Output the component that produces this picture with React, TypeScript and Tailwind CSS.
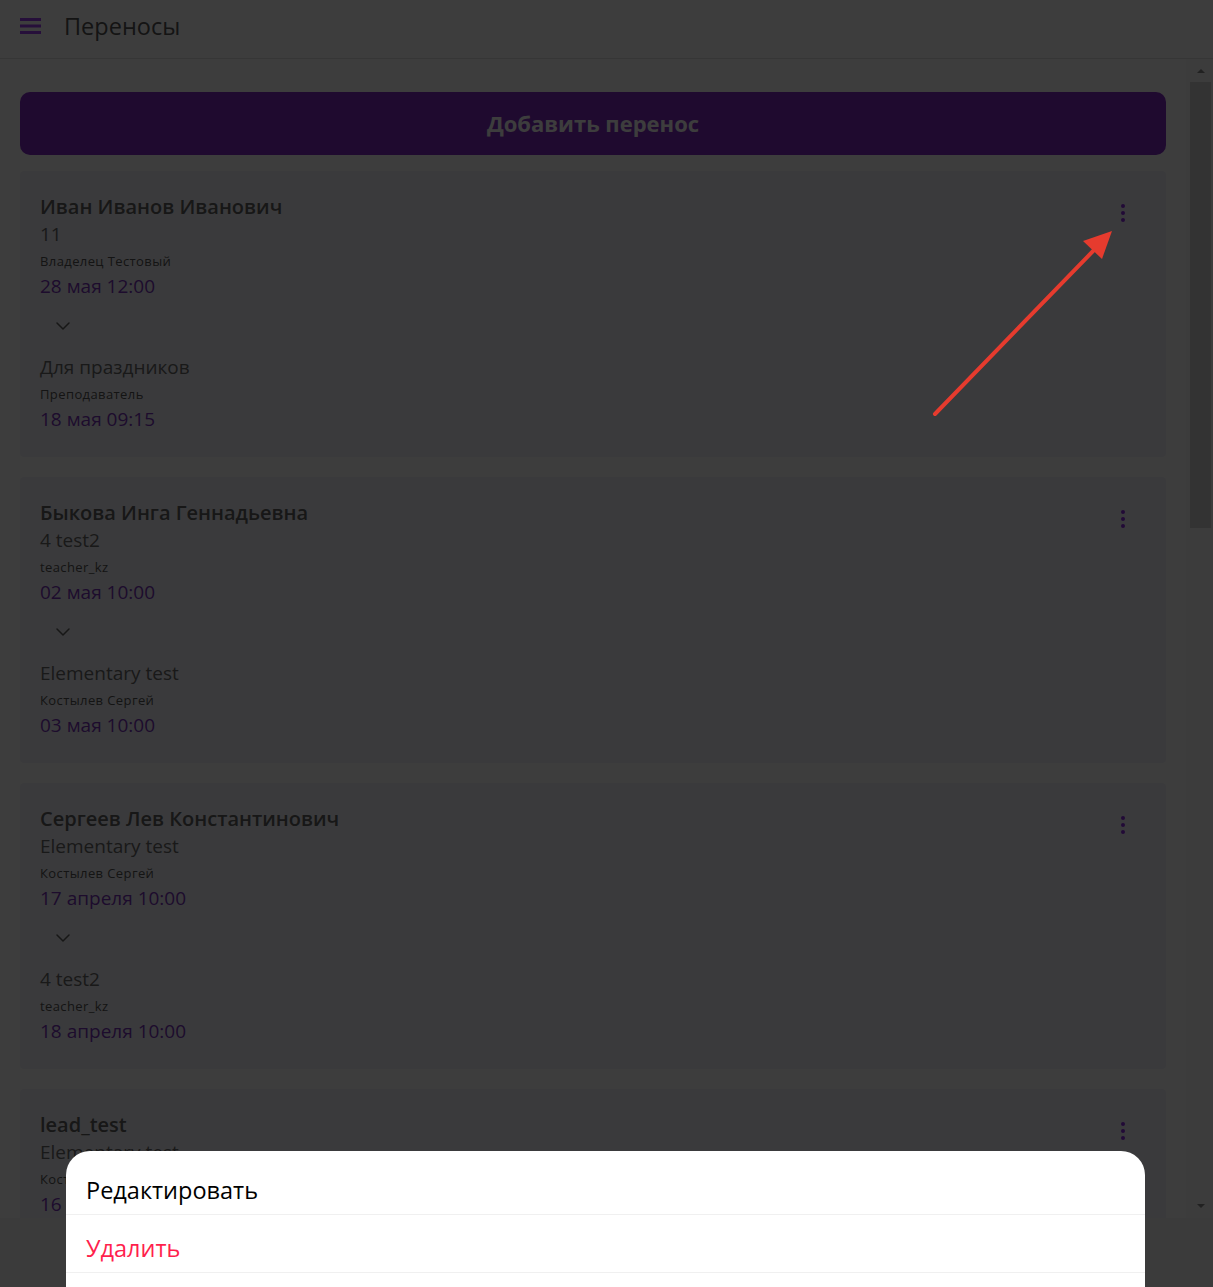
import { ChevronDown } from "lucide-react";

type Lesson = {
  title: string;
  teacher: string;
  date: string;
};

type Transfer = {
  id: number;
  student: string;
  from: Lesson;
  to: Lesson;
};

const transfers: Transfer[] = [
  {
    id: 1,
    student: "Иван Иванов Иванович",
    from: { title: "11", teacher: "Владелец Тестовый", date: "28 мая 12:00" },
    to: { title: "Для праздников", teacher: "Преподаватель", date: "18 мая 09:15" },
  },
  {
    id: 2,
    student: "Быкова Инга Геннадьевна",
    from: { title: "4 test2", teacher: "teacher_kz", date: "02 мая 10:00" },
    to: { title: "Elementary test", teacher: "Костылев Сергей", date: "03 мая 10:00" },
  },
  {
    id: 3,
    student: "Сергеев Лев Константинович",
    from: { title: "Elementary test", teacher: "Костылев Сергей", date: "17 апреля 10:00" },
    to: { title: "4 test2", teacher: "teacher_kz", date: "18 апреля 10:00" },
  },
  {
    id: 4,
    student: "lead_test",
    from: { title: "Elementary test", teacher: "Костылев Сергей", date: "16 апреля 10:00" },
    to: { title: "4 test2", teacher: "teacher_kz", date: "17 апреля 10:00" },
  },
];

function LessonBlock({ lesson }: { lesson: Lesson }) {
  return (
    <>
      <p className="text-[19px] leading-[26px] text-[#6a6a6a]">{lesson.title}</p>
      <p className="mt-[5px] text-[13px] leading-[18px] tracking-[0.4px] text-[#555]">
        {lesson.teacher}
      </p>
      <p className="mt-[3px] text-[19px] leading-[26px] text-[#7a34bc]">{lesson.date}</p>
    </>
  );
}

function TransferCard({ item }: { item: Transfer }) {
  return (
    <div className="flex h-[286px] rounded-[4px] bg-[#f3f3f9] pl-[20px] pr-[31px] pt-[22px]">
      <div className="flex-1">
        <p className="text-[20px] font-semibold leading-[28px] text-[#606060]">
          {item.student}
        </p>
        <LessonBlock lesson={item.from} />
        <button
          type="button"
          className="mt-[7px] flex h-[40px] w-[46px] items-center justify-center text-[#606060]"
        >
          <ChevronDown size={24} strokeWidth={1.5} />
        </button>
        <div className="mt-[8px]">
          <LessonBlock lesson={item.to} />
        </div>
      </div>
      <button
        type="button"
        className="mt-[8px] flex h-[24px] w-[24px] flex-col items-center justify-center gap-[3px]"
      >
        <span className="h-[4px] w-[4px] rounded-full bg-[#8b2be2]" />
        <span className="h-[4px] w-[4px] rounded-full bg-[#8b2be2]" />
        <span className="h-[4px] w-[4px] rounded-full bg-[#8b2be2]" />
      </button>
    </div>
  );
}

function Scrollbar() {
  return (
    <div className="flex w-[27px] flex-col bg-[#fbfbfb] pl-[4px] pr-[2px]">
      <div className="flex h-[23px] items-center justify-center">
        <span className="h-0 w-0 border-x-[4px] border-b-[4px] border-x-transparent border-b-[#8a8a8a]" />
      </div>
      <div className="h-[446px] bg-[#d5d5d5]" />
      <div className="flex-1" />
      <div className="flex h-[24px] items-center justify-center">
        <span className="h-0 w-0 border-x-[4px] border-t-[4px] border-x-transparent border-t-[#8a8a8a]" />
      </div>
    </div>
  );
}

export default function App() {
  return (
    <div
      className="relative flex h-[1287px] w-[1213px] flex-col overflow-hidden bg-white"
      style={{ fontFamily: '"Open Sans", "Noto Sans", sans-serif' }}
    >
      <header className="flex h-[59px] shrink-0 items-center border-b border-[#e0e0e0] pb-[6px] pl-[20px]">
        <svg width="21" height="16" viewBox="0 0 21 16">
          <rect x="0" y="0" width="21" height="3" fill="#a03ef0" />
          <rect x="0" y="6.5" width="21" height="3" fill="#a03ef0" />
          <rect x="0" y="13" width="21" height="3" fill="#a03ef0" />
        </svg>
        <h1 className="ml-[23px] text-[23.5px] leading-[30px] text-[#555]">Переносы</h1>
      </header>

      <div className="flex min-h-0 flex-1">
        <main className="min-w-0 flex-1 overflow-hidden px-[20px] pt-[33px]">
          <button
            type="button"
            className="flex h-[63px] w-full items-center justify-center rounded-[10px] bg-[#812ac4] text-[22px] font-bold text-white"
          >
            Добавить перенос
          </button>
          <div className="mt-[16px] flex flex-col gap-[20px]">
            {transfers.map((item) => (
              <TransferCard key={item.id} item={item} />
            ))}
          </div>
        </main>
        <Scrollbar />
      </div>
      <div className="h-[69px] shrink-0 bg-[#f7f7f7]" />

      {/* backdrop */}
      <div className="absolute inset-0 bg-black/[0.76]" />

      {/* action sheet */}
      <div className="absolute bottom-0 left-[66px] top-[1151px] w-[1079px] rounded-t-[24px] bg-white pt-[6px]">
        <button
          type="button"
          className="block h-[58px] w-full border-b border-[#f0f0f0] px-[20px] pb-[12px] pt-[20px] text-left text-[23.5px] leading-[26px] text-black"
        >
          Редактировать
        </button>
        <button
          type="button"
          className="block h-[58px] w-full border-b border-[#f0f0f0] px-[20px] pb-[12px] pt-[20px] text-left text-[23.5px] leading-[26px] text-[#ff1f4d]"
        >
          Удалить
        </button>
      </div>

      {/* annotation arrow */}
      <svg
        className="pointer-events-none absolute left-0 top-0"
        width="1213"
        height="1287"
        viewBox="0 0 1213 1287"
      >
        <line
          x1="935"
          y1="414"
          x2="1096"
          y2="248"
          stroke="#e63b2e"
          strokeWidth="4"
          strokeLinecap="round"
        />
        <polygon points="1112,231 1083,241 1102,259" fill="#e63b2e" />
      </svg>
    </div>
  );
}
